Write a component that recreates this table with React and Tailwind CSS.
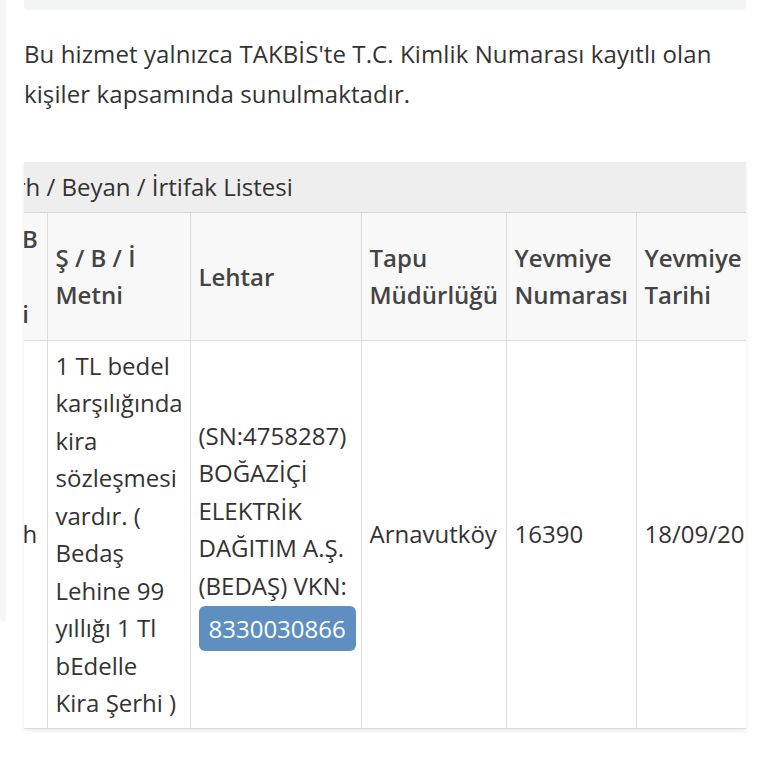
import React from 'react';

const cols = [71, 143, 171, 145, 130, 160];

const th = 'border-r border-b border-[#dddddd] pl-2 pr-1 text-left align-middle font-semibold';
const td = 'border-r border-b border-[#dddddd] pl-2 pr-1 align-middle';

export default function App() {
  return (
    <div className="relative min-h-screen bg-white font-['Open_Sans',sans-serif] text-[#333]">
      <div className="flex">
        <div className="h-[622px] w-[6px] bg-[#f6f6f6]" />
        <div className="min-w-0 flex-1 pl-[18px] pr-[22px]">
          <div className="h-[10px] rounded-b-sm bg-[#f3f4f6]" />

          <p className="mt-[24px] text-[24px] leading-[40px] tracking-[0.1px]">
            Bu hizmet yalnızca TAKBİS'te T.C. Kimlik Numarası kayıtlı olan kişiler kapsamında sunulmaktadır.
          </p>

          <div className="mt-[48px] overflow-hidden shadow-[0_2px_4px_rgba(0,0,0,0.08)]">
            <div className="ml-[-48px] w-[820px]">
              <div className="flex h-[51px] items-center border-b border-[#d6d6d6] bg-[#eeeeee] pl-[13px] text-[24px] whitespace-nowrap">
                Şerh / Beyan / İrtifak Listesi
              </div>
              <table className="w-full table-fixed border-collapse text-[24px] leading-[37.5px]">
                <colgroup>
                  {cols.map((w, i) => (
                    <col key={i} style={{ width: w }} />
                  ))}
                </colgroup>
                <thead>
                  <tr className="h-[127px] bg-[#f8f8f8] text-[#444]">
                    <th className="border-r border-b border-[#dddddd] pl-[11px] text-left align-middle font-semibold whitespace-nowrap">
                      Ş / B<br />/ İ<br />Tipi
                    </th>
                    <th className={th}>
                      Ş / B / İ<br />Metni
                    </th>
                    <th className={th}>Lehtar</th>
                    <th className={th}>
                      Tapu<br />Müdürlüğü
                    </th>
                    <th className={th}>
                      Yevmiye<br />Numarası
                    </th>
                    <th className="border-b border-[#dddddd] pl-2 pr-1 text-left align-middle font-semibold">
                      Yevmiye<br />Tarihi
                    </th>
                  </tr>
                </thead>
                <tbody>
                  <tr className="bg-white">
                    <td className="border-r border-b border-[#dddddd] pl-[10px] align-middle">Şerh</td>
                    <td className={td + ' py-[6px]'}>
                      1 TL bedel karşılığında kira sözleşmesi vardır. ( Bedaş Lehine 99 yıllığı 1 Tl bEdelle Kira Şerhi )
                    </td>
                    <td className={td}>
                      (SN:4758287) BOĞAZİÇİ ELEKTRİK DAĞITIM A.Ş. (BEDAŞ) VKN:
                      <span className="mt-[2px] inline-block rounded-md bg-[#5f8fc0] px-[10px] leading-[45px] text-white">
                        8330030866
                      </span>
                    </td>
                    <td className={td}>Arnavutköy</td>
                    <td className={td}>16390</td>
                    <td className="border-b border-[#dddddd] pl-2 pr-1 align-middle whitespace-nowrap">18/09/2019</td>
                  </tr>
                </tbody>
              </table>
            </div>
          </div>
        </div>
      </div>
    </div>
  );
}
